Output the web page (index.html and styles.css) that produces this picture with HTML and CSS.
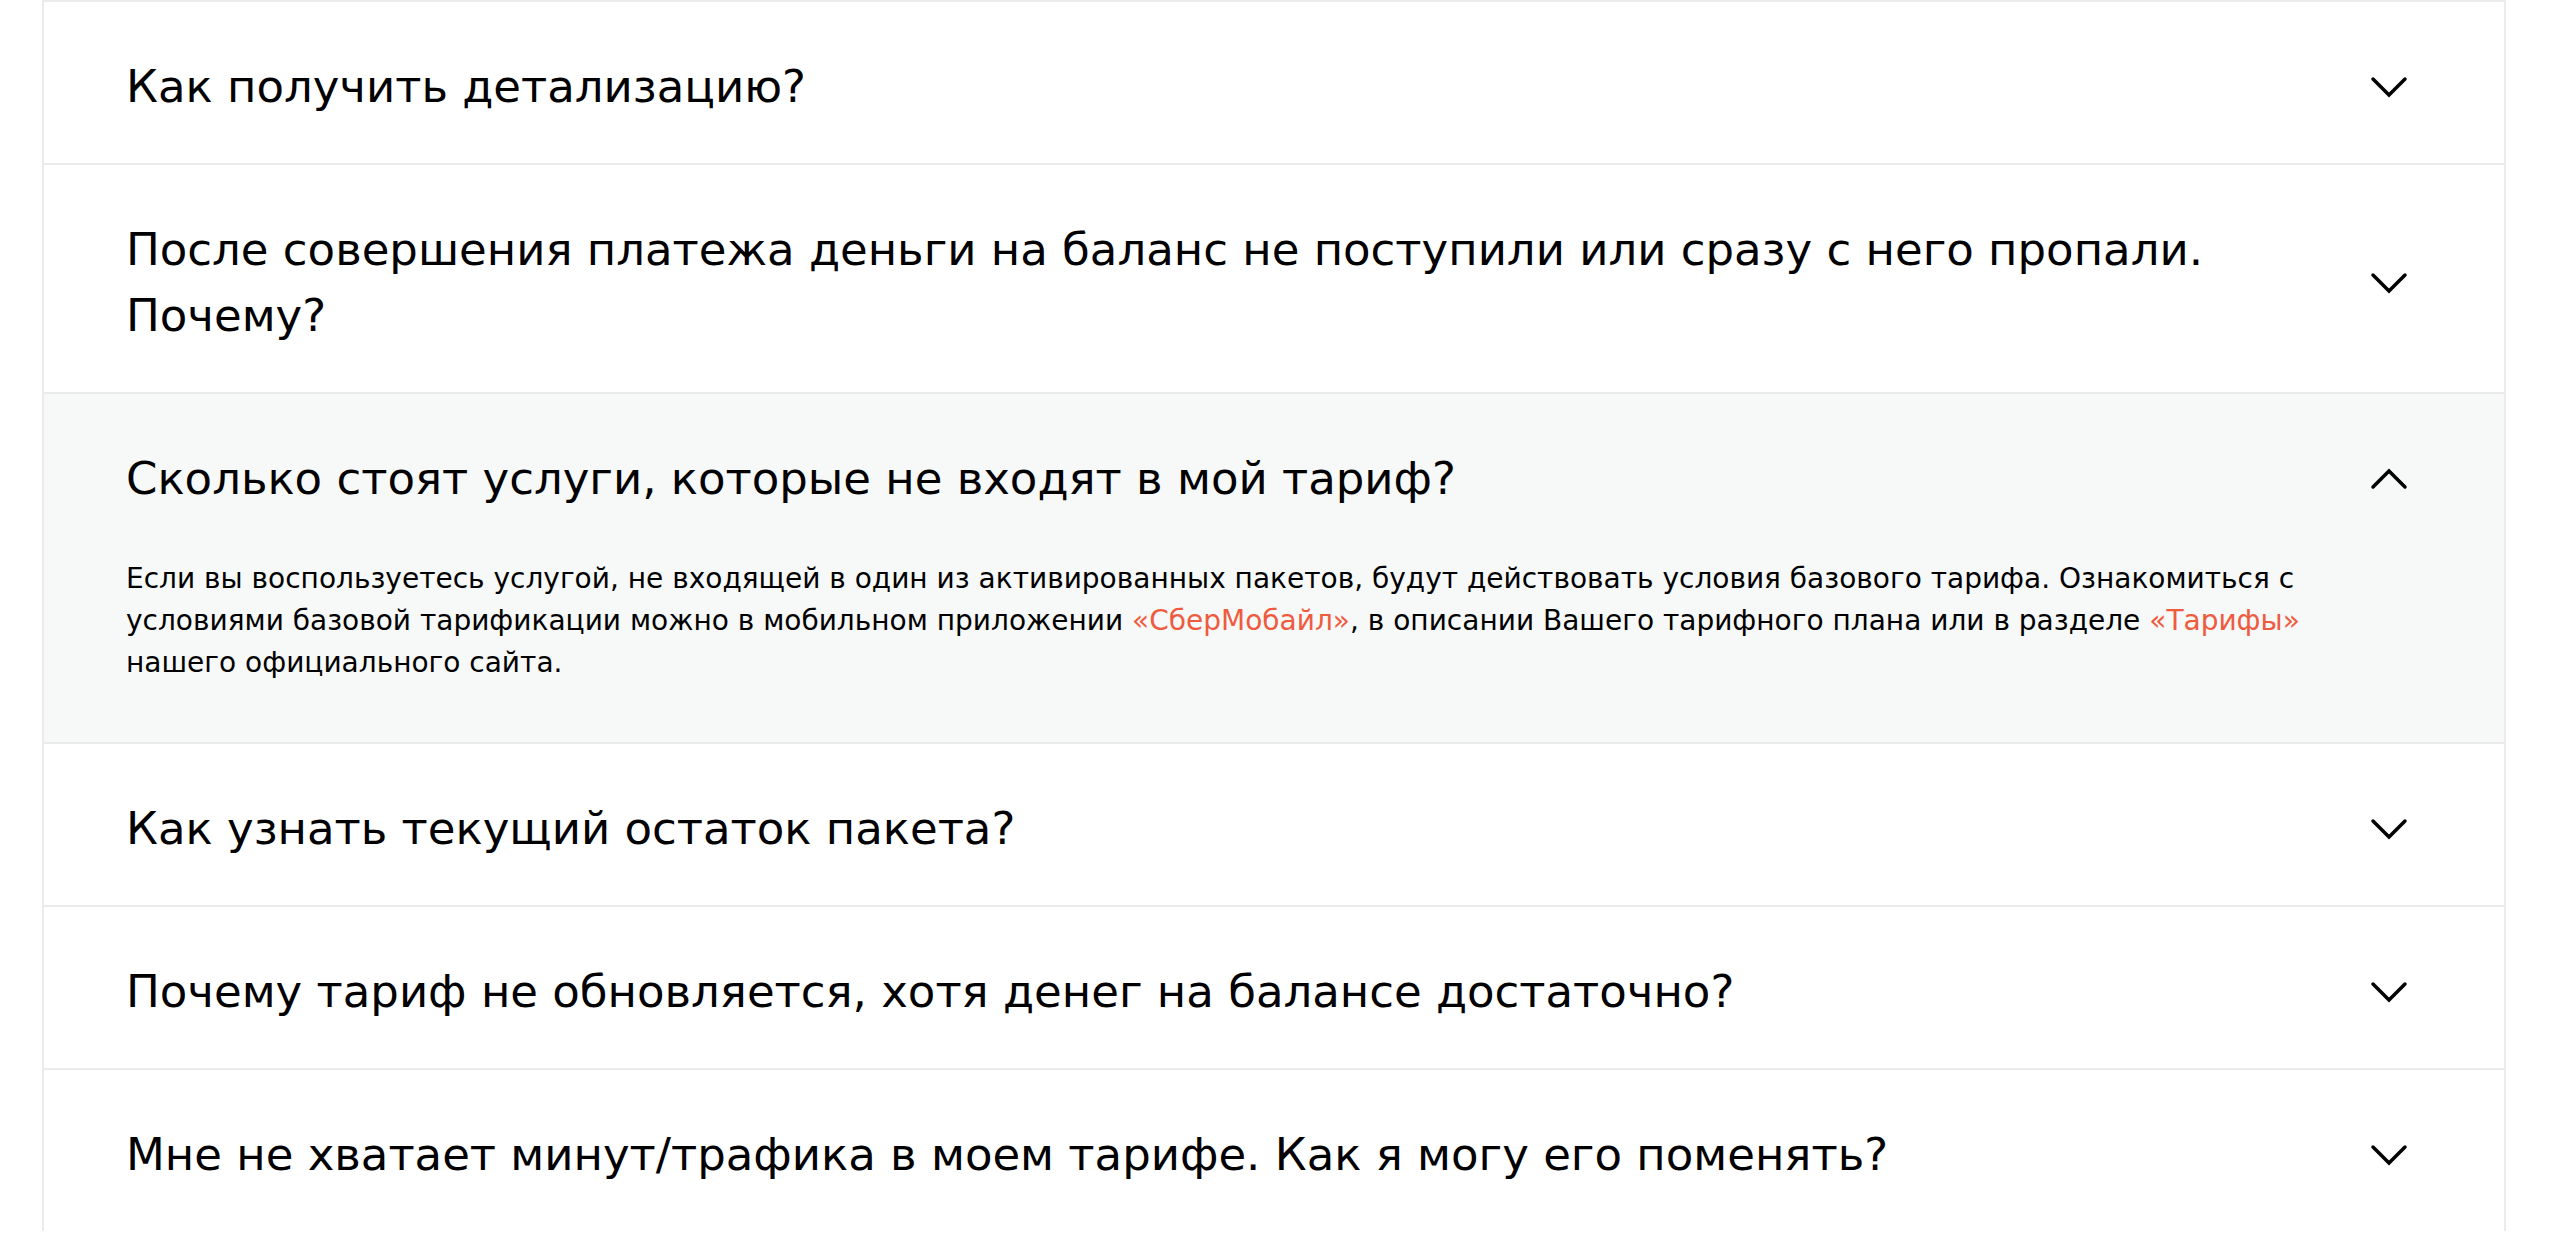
FILE: index.html
```html
<!DOCTYPE html>
<html lang="ru">
<head>
<meta charset="utf-8">
<title>FAQ</title>
<link rel="stylesheet" href="styles.css">
</head>
<body>
<div class="faq">
  <div class="item">
    <div class="head">
      <div class="title">Как получить детализацию?</div>
      <svg class="chev" viewBox="0 0 40 24" width="40" height="24"><polyline points="4,4 20,20 36,4"/></svg>
    </div>
  </div>
  <div class="item">
    <div class="head">
      <div class="title">После совершения платежа деньги на баланс не поступили или сразу с него пропали. Почему?</div>
      <svg class="chev" viewBox="0 0 40 24" width="40" height="24"><polyline points="4,4 20,20 36,4"/></svg>
    </div>
  </div>
  <div class="item open">
    <div class="head">
      <div class="title">Сколько стоят услуги, которые не входят в мой тариф?</div>
      <svg class="chev" viewBox="0 0 40 24" width="40" height="24"><polyline points="4,20 20,4 36,20"/></svg>
    </div>
    <div class="body">Если вы воспользуетесь услугой, не входящей в один из активированных пакетов, будут действовать условия базового тарифа. Ознакомиться с условиями базовой тарификации можно в мобильном приложении <a class="link" href="#">«СберМобайл»</a>, в описании Вашего тарифного плана или в разделе <a class="link" href="#">«Тарифы»</a> нашего официального сайта.</div>
  </div>
  <div class="item">
    <div class="head">
      <div class="title">Как узнать текущий остаток пакета?</div>
      <svg class="chev" viewBox="0 0 40 24" width="40" height="24"><polyline points="4,4 20,20 36,4"/></svg>
    </div>
  </div>
  <div class="item">
    <div class="head">
      <div class="title">Почему тариф не обновляется, хотя денег на балансе достаточно?</div>
      <svg class="chev" viewBox="0 0 40 24" width="40" height="24"><polyline points="4,4 20,20 36,4"/></svg>
    </div>
  </div>
  <div class="item">
    <div class="head">
      <div class="title">Мне не хватает минут/трафика в моем тарифе. Как я могу его поменять?</div>
      <svg class="chev" viewBox="0 0 40 24" width="40" height="24"><polyline points="4,4 20,20 36,4"/></svg>
    </div>
  </div>
</div>
</body>
</html>
```
FILE: styles.css
```css
html, body {
  margin: 0;
  padding: 0;
  background: #ffffff;
}

body {
  font-family: "DejaVu Sans", "Noto Sans", sans-serif;
  color: #000000;
}

.faq {
  margin-left: 42px;
  width: 2464px;
  box-sizing: border-box;
  border-left: 2px solid #ebebeb;
  border-right: 2px solid #ebebeb;
}

.item {
  border-top: 2px solid #ebebeb;
  background: #ffffff;
}

.item.open {
  background: #f7f8f8;
}

.head {
  display: flex;
  align-items: center;
  padding: 52px 95px 43px 82px;
}

.title {
  flex: 1;
  font-size: 45px;
  line-height: 66px;
  padding-right: 120px;
}

.chev {
  flex: none;
  display: block;
  fill: none;
  stroke: #000000;
  stroke-width: 3.5;
  stroke-linecap: round;
  stroke-linejoin: miter;
}

.body {
  padding: 3px 140px 58px 82px;
  font-size: 28px;
  line-height: 42px;
}

.link {
  color: #ef5b3f;
  text-decoration: none;
}
```
